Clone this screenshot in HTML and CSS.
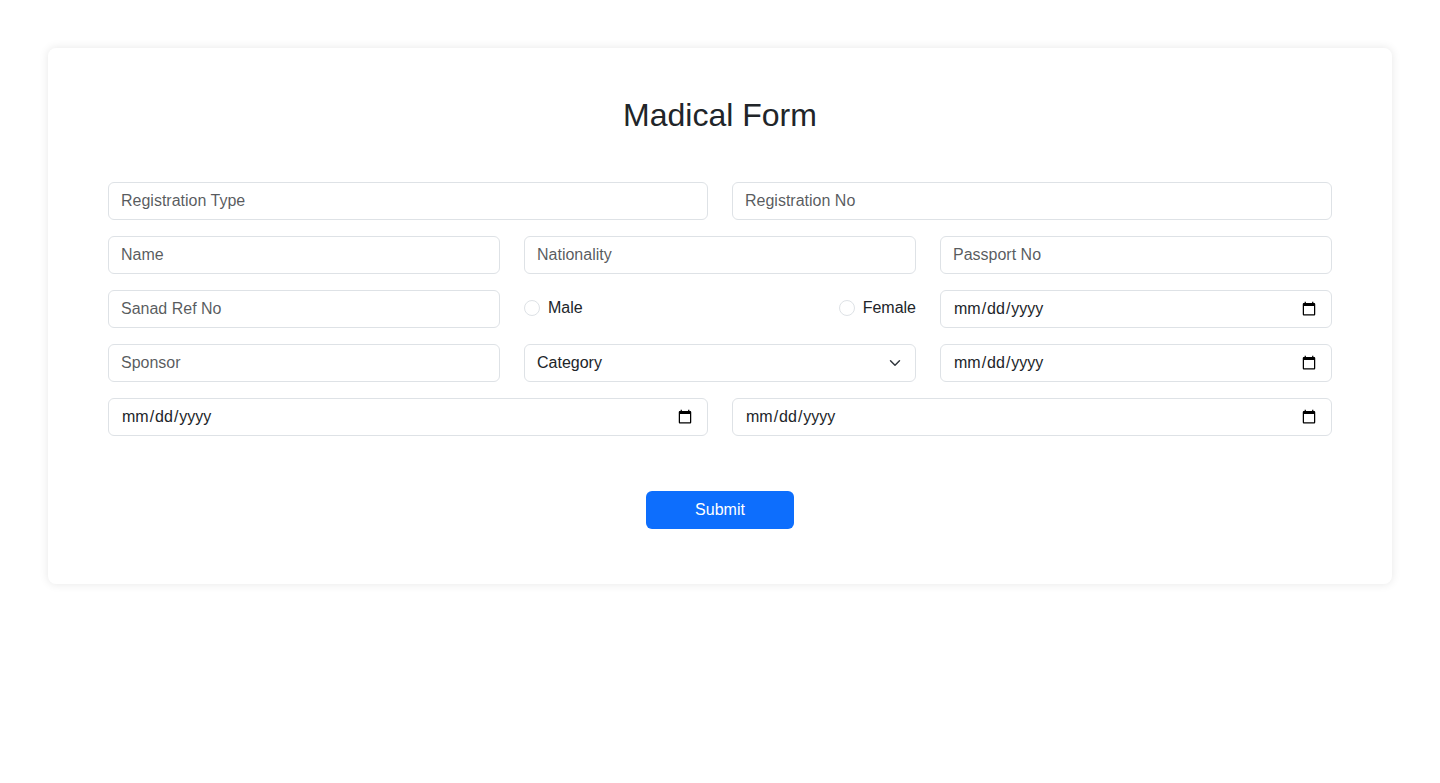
FILE: index.html
```html
<!DOCTYPE html>
<html lang="en">
<head>
<meta charset="utf-8">
<title>Madical Form</title>
<link rel="stylesheet" href="styles.css">
</head>
<body>
<main class="page">
  <form class="card">
    <h2 class="title">Madical Form</h2>
    <div class="rows">
      <div class="row two">
        <input class="field" type="text" placeholder="Registration Type">
        <input class="field" type="text" placeholder="Registration No">
      </div>
      <div class="row three">
        <input class="field" type="text" placeholder="Name">
        <input class="field" type="text" placeholder="Nationality">
        <input class="field" type="text" placeholder="Passport No">
      </div>
      <div class="row three">
        <input class="field" type="text" placeholder="Sanad Ref No">
        <div class="gender">
          <label class="radio"><input type="radio" name="gender"><span>Male</span></label>
          <label class="radio"><input type="radio" name="gender"><span>Female</span></label>
        </div>
        <input class="field" type="date">
      </div>
      <div class="row three">
        <input class="field" type="text" placeholder="Sponsor">
        <select class="field select">
          <option>Category</option>
        </select>
        <input class="field" type="date">
      </div>
      <div class="row two">
        <input class="field" type="date">
        <input class="field" type="date">
      </div>
    </div>
    <div class="actions">
      <button class="submit" type="button">Submit</button>
    </div>
  </form>
</main>
</body>
</html>
```

FILE: styles.css
```css
* { box-sizing: border-box; }
html, body { margin: 0; background: #fff; }
body {
  font-family: "Liberation Sans", Arial, sans-serif;
  color: #212529;
  font-size: 16px;
}
.page { padding: 48px; }
.card {
  background: #fff;
  border-radius: 8px;
  box-shadow: 0 0 10px rgba(0, 0, 0, 0.1);
  padding: 48px 60px 55px;
}
.title {
  margin: 0 0 48px;
  text-align: center;
  font-size: 32px;
  font-weight: 400;
  line-height: 38px;
  color: #212529;
}
.rows { display: flex; flex-direction: column; gap: 16px; }
.row { display: grid; column-gap: 24px; }
.row.two { grid-template-columns: 1fr 1fr; }
.row.three { grid-template-columns: 1fr 1fr 1fr; }
.field {
  height: 38px;
  width: 100%;
  padding: 6px 12px;
  font: inherit;
  font-size: 16px;
  line-height: 24px;
  color: #212529;
  background: #fff;
  border: 1px solid #dee2e6;
  border-radius: 6px;
  outline: none;
  appearance: none;
}
.field::placeholder { color: rgba(33, 37, 41, 0.75); }
.field[type="date"] { -webkit-appearance: auto; appearance: auto; }
.select {
  background-image: url("data:image/svg+xml,%3csvg xmlns='http://www.w3.org/2000/svg' viewBox='0 0 16 16'%3e%3cpath fill='none' stroke='%23343a40' stroke-linecap='round' stroke-linejoin='round' stroke-width='2' d='m2 5 6 6 6-6'/%3e%3c/svg%3e");
  background-repeat: no-repeat;
  background-position: right 12px center;
  background-size: 16px 12px;
  padding-right: 36px;
}
.gender {
  display: flex;
  justify-content: space-between;
  align-items: center;
  height: 38px;
  padding-bottom: 2px;
}
.radio { display: flex; align-items: center; gap: 8px; font-size: 16px; color: #212529; }
.radio input {
  appearance: none;
  margin: 0;
  width: 16px;
  height: 16px;
  border: 1px solid #dee2e6;
  border-radius: 50%;
  background: #fff;
}
.actions { display: flex; justify-content: center; margin-top: 55px; }
.submit {
  width: 148px;
  height: 38px;
  border: 0;
  border-radius: 6px;
  background: #0d6efd;
  color: #fff;
  font: inherit;
  font-size: 16px;
  cursor: pointer;
}
```
